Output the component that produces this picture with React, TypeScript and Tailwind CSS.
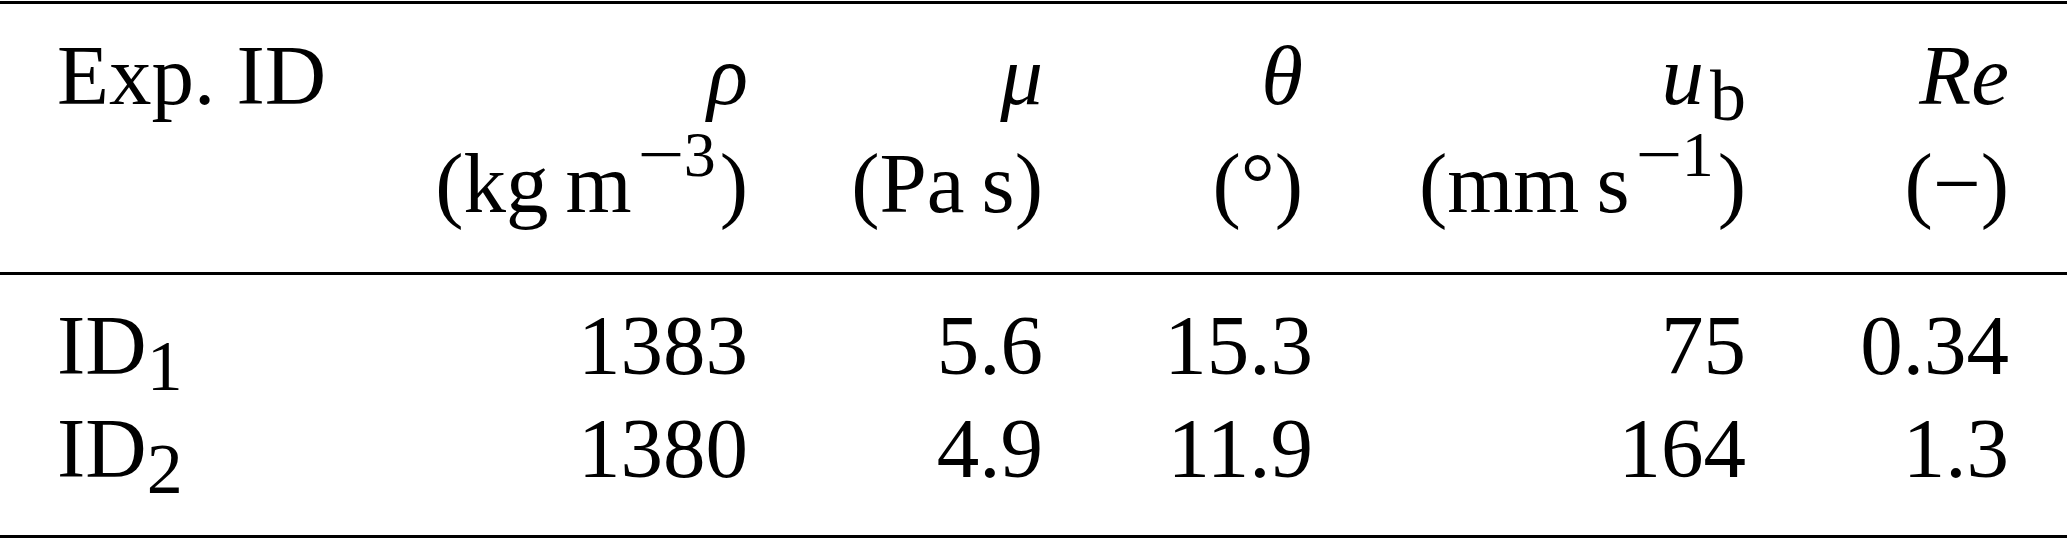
import React from 'react';

const rows = [
  { id: '1', rho: '1383', mu: '5.6', theta: '15.3', ub: '75', re: '0.34' },
  { id: '2', rho: '1380', mu: '4.9', theta: '11.9', ub: '164', re: '1.3' },
];

const Rule = () => <div className="h-[3px] w-full bg-black" />;

// negative exponent, the minus is drawn wider like the TeX one
const Exp = ({ n }: { n: string }) => (
  <span className="relative -top-[36px] ml-[6px] mr-[4px] text-[64px] leading-none">
    <span className="inline-block mx-[5px] scale-x-[1.3]">−</span>
    {n}
  </span>
);

const Sub = ({ children, className = '' }: { children: React.ReactNode; className?: string }) => (
  <span className={`relative top-[16px] text-[72px] leading-none ${className}`}>{children}</span>
);

const cols = 'grid grid-cols-[343px_348px_295px_270px_433px_263px] pl-[57px]';

export default function App() {
  return (
    <div className="w-[2067px] h-[540px] bg-white text-black [font-family:'Liberation_Serif',serif] text-[85px] overflow-hidden pt-px">
      <Rule />

      {/* header */}
      <div className={`${cols} mt-[17px] leading-[108px] whitespace-nowrap`}>
        <div>Exp. ID</div>
        <div className="text-right italic">ρ</div>
        <div className="text-right italic">μ</div>
        <div className="text-right italic pr-[10px]">θ</div>
        <div className="text-right">
          <span className="italic">u</span>
          <Sub className="ml-[6px]">b</Sub>
        </div>
        <div className="text-right italic">Re</div>

        <div />
        <div className="text-right">
          (kg&thinsp;m<Exp n="3" />)
        </div>
        <div className="text-right">(Pa&thinsp;s)</div>
        <div className="text-right pr-[10px]">(°)</div>
        <div className="text-right">
          (mm&thinsp;s<Exp n="1" />)
        </div>
        <div className="text-right">(−)</div>
      </div>

      <div className="mt-[35px]">
        <Rule />
      </div>

      {/* data */}
      <div className={`${cols} mt-[19px] leading-[103px] whitespace-nowrap`}>
        {rows.map((r) => (
          <React.Fragment key={r.id}>
            <div>
              ID<Sub>{r.id}</Sub>
            </div>
            <div className="text-right">{r.rho}</div>
            <div className="text-right">{r.mu}</div>
            <div className="text-right">{r.theta}</div>
            <div className="text-right">{r.ub}</div>
            <div className="text-right">{r.re}</div>
          </React.Fragment>
        ))}
      </div>

      <div className="mt-[35px]">
        <Rule />
      </div>
    </div>
  );
}
